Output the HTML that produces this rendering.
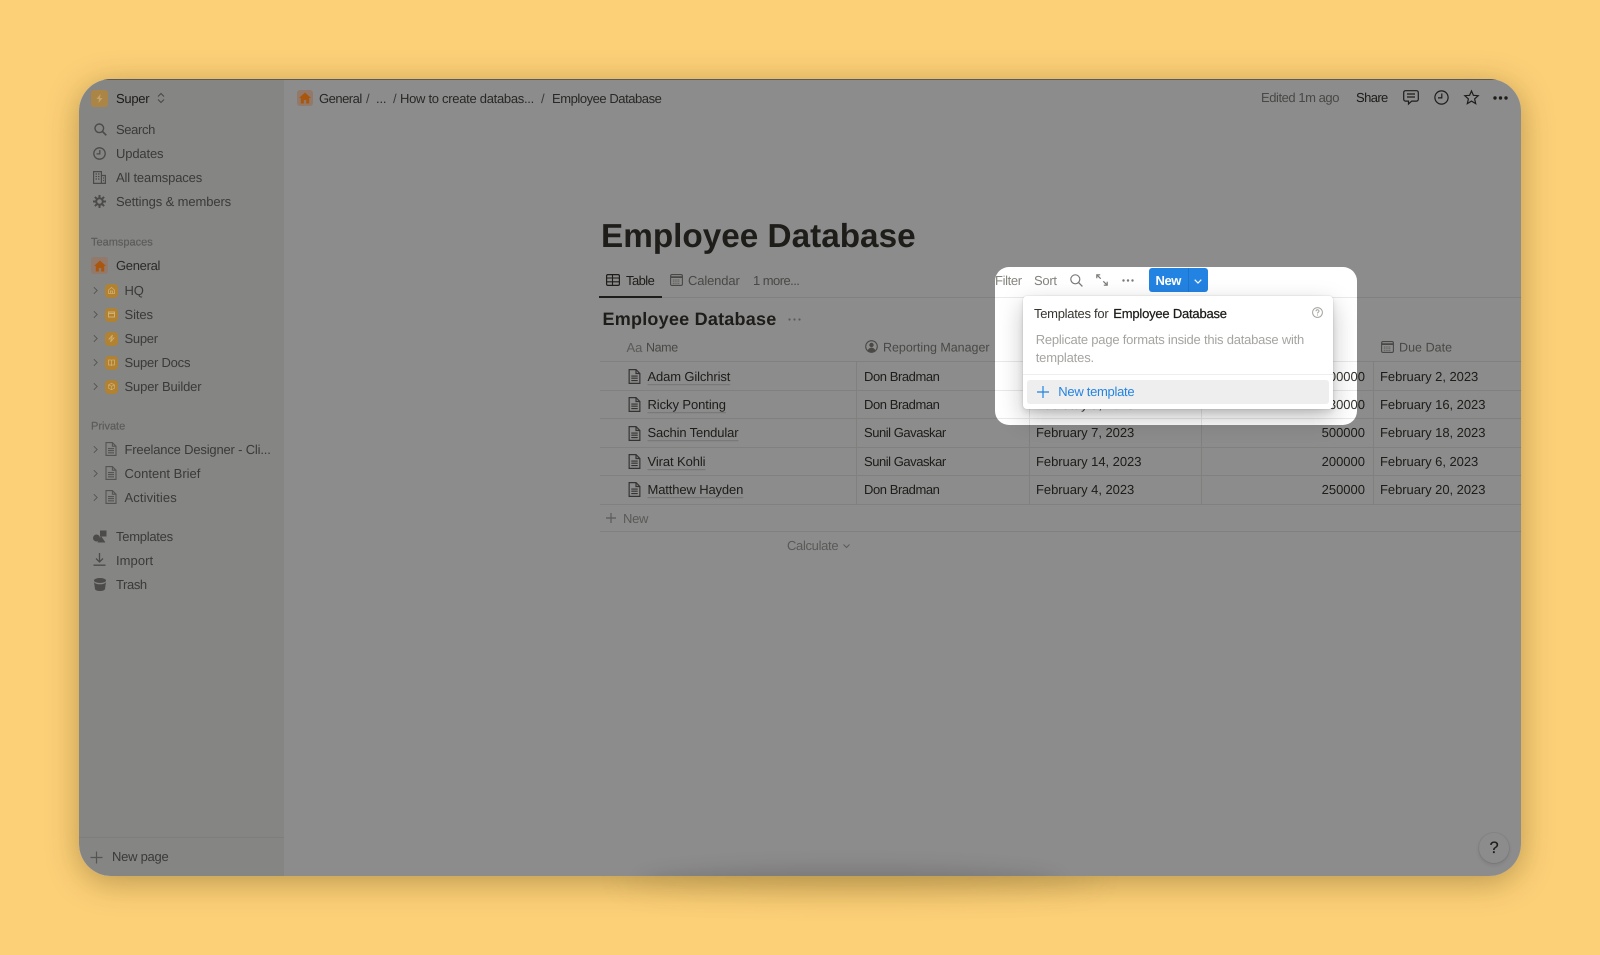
<!DOCTYPE html>
<html lang="en"><head><meta charset="utf-8"><title>Employee Database</title>
<style>
html,body{margin:0;padding:0;width:1600px;height:955px;overflow:hidden;background:#fcd077;font-family:"Liberation Sans",sans-serif;text-rendering:geometricPrecision}
.shadow{position:absolute;left:79px;top:79px;width:1442px;height:797px;border-radius:32px;box-shadow:0 6px 32px rgba(60,40,0,.34)}
.shadow2{position:absolute;left:620px;top:862px;width:480px;height:32px;border-radius:50%;background:rgba(60,40,0,.12);filter:blur(14px)}
.win{position:absolute;left:79px;top:79px;width:1442px;height:797px;border-radius:32px;overflow:hidden;background:#fff;filter:blur(.35px)}
.in{position:absolute;left:-79px;top:-79px;width:1600px;height:955px}
.t{position:absolute;white-space:nowrap;transform:translateY(-50%);line-height:1.2;font-size:13px;letter-spacing:-.15px;color:#37352f}
.s{color:#6b6a66}
.g{color:#85847f}
.u{text-decoration:underline;text-decoration-color:rgba(55,53,47,.22);text-underline-offset:3px}
.h{font-size:11px;letter-spacing:0;color:#a8a7a3;-webkit-text-stroke:.2px #a8a7a3}
.r{position:absolute;left:600px;width:921px;height:1px;background:#e9e9e7}
.c{position:absolute;width:1px;background:#e9e9e7}
svg{position:absolute;overflow:visible}
.ic{fill:none;stroke:#8a8985;stroke-width:1.2}
.hole{position:absolute;left:995px;top:267px;width:362px;height:158px;border-radius:14px;box-shadow:0 0 0 2400px rgba(0,0,0,.45)}
.pop{position:absolute;left:1023px;top:296px;width:310px;height:113px;background:#fff;border-radius:4px;box-shadow:0 0 0 1px rgba(15,15,15,.04),0 3px 6px rgba(15,15,15,.1),0 9px 24px rgba(15,15,15,.25)}
.sq{position:absolute;left:104.500px;width:13.500px;height:13.500px;border-radius:4px;background:#b08232}
.dim{color:#9a9995}
</style></head><body>
<svg width="0" height="0" style="position:absolute"><defs>
<symbol id="doc" viewBox="0 0 12 14"><path d="M1 .6h6.4L11 4.2v9.2H1z M7.4.6v3.6H11 M3 6.6h6M3 8.6h6M3 10.8h6" fill="none" stroke="currentColor" stroke-width="1.1"/></symbol>
<symbol id="chev" viewBox="0 0 6 10"><path d="M1 1l4 4-4 4" fill="none" stroke="currentColor" stroke-width="1.1"/></symbol>
<symbol id="cal" viewBox="0 0 14 13"><rect x=".6" y=".6" width="12.8" height="11.8" rx="1.6" fill="none" stroke="currentColor" stroke-width="1.2"/><path d="M.6 3.4h12.8" stroke="currentColor" stroke-width="2"/><path d="M3 6.5h8M3 8.5h8M3 10.5h8" stroke="currentColor" stroke-width="1" stroke-dasharray="1 1"/></symbol>
</defs></svg>
<div class="shadow"></div><div class="shadow2"></div>
<div class="win"><div class="in">
<!-- sidebar -->
<div style="position:absolute;left:79px;top:79px;width:205px;height:797px;background:#f2f2f0"></div>
<div style="position:absolute;left:79px;top:837px;width:205px;height:1px;background:#e6e6e4"></div>
<span class="t" style="left:116px;top:98.500px;letter-spacing:-.28px;">Super</span>
<svg style="left:156px;top:92px;color:#85847f" width="10" height="12" viewBox="0 0 10 12"><path d="M2 4.5L5 1.5 8 4.5M2 7.5L5 10.5 8 7.5" fill="none" stroke="currentColor" stroke-width="1.1"/></svg>
<span class="t s" style="left:116px;top:129.500px;letter-spacing:-.36px">Search</span>
<span class="t s" style="left:116px;top:153.500px">Updates</span>
<span class="t s" style="left:116px;top:177.500px">All teamspaces</span>
<span class="t s" style="left:116px;top:201.500px;letter-spacing:-.11px">Settings &amp; members</span>
<svg class="ic" style="left:94px;top:123px" width="13" height="13" viewBox="0 0 13 13"><circle cx="5.300" cy="5.300" r="4.300" stroke-width="1.400"/><path d="M8.500 8.500l3.800 3.800" stroke-width="1.600"/></svg>
<svg class="ic" style="left:93px;top:147px" width="13" height="13" viewBox="0 0 13 13"><circle cx="6.500" cy="6.500" r="5.700" stroke-width="1.300"/><path d="M6.800 3v3.900H3.500" stroke-width="1.300"/></svg>
<svg class="ic" style="left:93px;top:171px" width="13" height="13" viewBox="0 0 13 13"><path d="M.6.600h7.800v11.800H.6zM8.400 4.500h4v7.900h-4M2.500 3h1.500M5 3h1.500M2.500 5.500h1.500M5 5.500h1.500M2.500 8h1.500M5 8h1.500M10 7h1M10 9.500h1"/></svg>
<svg class="ic" style="left:93px;top:195px" width="13" height="13" viewBox="0 0 13 13"><circle cx="6.500" cy="6.500" r="3.300" stroke-width="2"/><path d="M6.500 0v2.500M6.500 10.500V13M0 6.500h2.500M10.500 6.500H13M1.900 1.900l1.800 1.800M9.300 9.300l1.800 1.800M1.900 11.100l1.800-1.800M9.300 3.700l1.800-1.800" stroke-width="2"/></svg>

<span class="t h" style="left:91px;top:242.500px">Teamspaces</span>
<span class="t" style="left:116px;top:265.500px;color:#4f4e4a;letter-spacing:-.3px">General</span>
<span class="t s" style="left:124.500px;top:290.500px">HQ</span>
<span class="t s" style="left:124.500px;top:314.500px;letter-spacing:-.1px">Sites</span>
<span class="t s" style="left:124.500px;top:338.500px;letter-spacing:-.28px">Super</span>
<span class="t s" style="left:124.500px;top:362.500px;letter-spacing:-.22px">Super Docs</span>
<span class="t s" style="left:124.500px;top:386.500px;letter-spacing:-.14px">Super Builder</span>
<span class="t h" style="left:91px;top:426.500px">Private</span>
<span class="t s" style="left:124.500px;top:449.500px;letter-spacing:-.18px">Freelance Designer - Cli...</span>
<span class="t s" style="left:124.500px;top:473.500px;letter-spacing:0">Content Brief</span>
<span class="t s" style="left:124.500px;top:497.500px;letter-spacing:.1px">Activities</span>
<svg class="dim" style="left:93px;top:286px" width="5" height="9"><use href="#chev"/></svg>
<svg class="dim" style="left:93px;top:310px" width="5" height="9"><use href="#chev"/></svg>
<svg class="dim" style="left:93px;top:334px" width="5" height="9"><use href="#chev"/></svg>
<svg class="dim" style="left:93px;top:358px" width="5" height="9"><use href="#chev"/></svg>
<svg class="dim" style="left:93px;top:382px" width="5" height="9"><use href="#chev"/></svg>
<svg class="dim" style="left:93px;top:445px" width="5" height="9"><use href="#chev"/></svg>
<svg class="dim" style="left:93px;top:469px" width="5" height="9"><use href="#chev"/></svg>
<svg class="dim" style="left:93px;top:493px" width="5" height="9"><use href="#chev"/></svg>
<svg class="dim" style="left:105px;top:442px" width="12" height="14"><use href="#doc"/></svg>
<svg class="dim" style="left:105px;top:466px" width="12" height="14"><use href="#doc"/></svg>
<svg class="dim" style="left:105px;top:490px" width="12" height="14"><use href="#doc"/></svg>

<span class="t s" style="left:116px;top:536.500px;letter-spacing:-.27px">Templates</span>
<span class="t s" style="left:116px;top:560.500px;letter-spacing:.05px">Import</span>
<span class="t s" style="left:116px;top:584.500px;letter-spacing:-.4px">Trash</span>
<svg style="left:93px;top:530px;fill:#8a8985" width="14" height="13" viewBox="0 0 14 13"><circle cx="3.500" cy="8" r="3.500"/><rect x="7" y=".5" width="6.500" height="6"/><path d="M8 6l4.500 6.500h-8z"/></svg>
<svg class="ic" style="left:93px;top:553px" width="13" height="13" viewBox="0 0 13 13"><path d="M6.500 0v8.500M3 5.500l3.500 3.500L10 5.500M.5 12.200h12" stroke-width="1.300"/></svg>
<svg style="left:94px;top:578px;fill:#8a8985" width="12" height="13" viewBox="0 0 12 13"><ellipse cx="6" cy="2.500" rx="6" ry="2.500"/><path d="M0 4c1 1.800 3.500 2.300 6 2.300S11 5.800 12 4l-1 7c-.3 1.300-2.500 2-5 2s-4.700-.7-5-2z"/></svg>
<span class="t s" style="left:112px;top:857px;letter-spacing:-.26px">New page</span>
<svg class="ic" style="left:90px;top:851px;stroke:#9a9995" width="13" height="13" viewBox="0 0 13 13"><path d="M6.500.5v12M.5 6.500h12"/></svg>

<!-- top bar -->
<span class="t" style="left:319px;top:98.800px;color:#4a4945;letter-spacing:-.5px">General</span>
<span class="t s" style="left:366px;top:98.800px">/</span>
<span class="t" style="left:376px;top:98.800px;color:#4a4945">...</span>
<span class="t s" style="left:393px;top:98.800px">/</span>
<span class="t" style="left:400px;top:98.800px;color:#4a4945;letter-spacing:-.29px">How to create databas...</span>
<span class="t s" style="left:541px;top:98.800px">/</span>
<span class="t" style="left:552px;top:98.800px;color:#4a4945;letter-spacing:-.45px">Employee Database</span>
<span class="t" style="left:1261px;top:97.500px;color:#85847f;letter-spacing:-.45px">Edited 1m ago</span>
<span class="t" style="left:1356px;top:97.500px;letter-spacing:-.6px">Share</span>
<svg class="ic" style="left:1403px;top:90px;stroke:#37352f" width="16" height="15" viewBox="0 0 16 15"><path d="M2.500.7h11a1.800 1.800 0 0 1 1.800 1.800v6.800a1.800 1.800 0 0 1-1.800 1.800H8.700L5.500 14v-2.900h-3A1.800 1.800 0 0 1 .7 9.300V2.500A1.800 1.800 0 0 1 2.500.7zM4 4h8M4 7h8"/></svg>
<svg class="ic" style="left:1434px;top:90px;stroke:#37352f" width="15" height="15" viewBox="0 0 15 15"><circle cx="7.500" cy="7.500" r="6.600"/><path d="M7.800 3.500v4.400H4"/></svg>
<svg class="ic" style="left:1464px;top:90px;stroke:#37352f" width="15" height="15" viewBox="0 0 15 15"><path d="M7.500 1l1.900 4.300 4.800.4-3.600 3.200 1.100 4.700-4.200-2.500-4.200 2.500 1.100-4.700L.8 5.700l4.800-.4z"/></svg>
<svg style="left:1493px;top:96px;fill:#37352f" width="15" height="4" viewBox="0 0 15 4"><circle cx="2" cy="2" r="1.700"/><circle cx="7.500" cy="2" r="1.700"/><circle cx="13" cy="2" r="1.700"/></svg>

<!-- title -->
<div class="t" style="left:601px;top:237px;font-size:33.300px;font-weight:bold;letter-spacing:0;color:#37352f">Employee Database</div>
<!-- tabs -->
<svg style="left:606px;top:274px;color:#37352f" width="14" height="12" viewBox="0 0 14 12"><rect x=".6" y=".6" width="12.800" height="10.800" rx="1.400" fill="none" stroke="currentColor" stroke-width="1.200"/><path d="M.6 4h12.800M.6 7.800h12.800M6.500.6v10.800" stroke="currentColor" stroke-width="1.100"/></svg>
<span class="t" style="left:626px;top:280.500px;letter-spacing:-.55px">Table</span>
<svg style="left:670px;top:274px;color:#85847f" width="13" height="12"><use href="#cal"/></svg>
<span class="t g" style="left:688px;top:280.500px;letter-spacing:-.14px">Calendar</span>
<span class="t g" style="left:753px;top:280.500px;letter-spacing:-.55px">1 more...</span>
<div class="r" style="top:297px"></div>
<div style="position:absolute;left:599px;top:296px;width:63px;height:2px;background:#37352f"></div>
<span class="t g" style="left:995px;top:280.500px;letter-spacing:-.37px">Filter</span>
<span class="t g" style="left:1034px;top:280.500px;letter-spacing:-.28px">Sort</span>
<svg class="ic" style="left:1070px;top:274px;stroke:#7a7975" width="13" height="13" viewBox="0 0 13 13"><circle cx="5.300" cy="5.300" r="4.500" stroke-width="1.200"/><path d="M8.600 8.600l3.800 3.800" stroke-width="1.300"/></svg>
<svg class="ic" style="left:1096px;top:274px;stroke:#7a7975" width="12" height="12" viewBox="0 0 12 12"><path d="M.8.800l3.900 3.900M.8 4.200V.8h3.400M11.200 11.200L7.300 7.300M11.200 7.800v3.400H7.800"/></svg>
<svg style="left:1122px;top:279px;fill:#7a7975" width="12" height="3" viewBox="0 0 12 3"><circle cx="1.500" cy="1.500" r="1.200"/><circle cx="6" cy="1.500" r="1.200"/><circle cx="10.500" cy="1.500" r="1.200"/></svg>
<div style="position:absolute;left:1149px;top:268px;width:59px;height:24px;background:#2383e2;border-radius:3px"></div>
<div style="position:absolute;left:1188px;top:268px;width:1px;height:24px;background:#1f74c9"></div>
<span class="t" style="left:1155.500px;top:280.500px;color:#fff;font-weight:bold;letter-spacing:-.45px">New</span>
<svg style="left:1194px;top:279px" width="8" height="5" viewBox="0 0 8 5"><path d="M.7.700L4 4 7.300.7" fill="none" stroke="#fff" stroke-width="1.200"/></svg>

<div class="t" style="left:602.500px;top:320px;font-size:18px;font-weight:bold;letter-spacing:.23px;color:#37352f">Employee Database</div>
<svg style="left:788px;top:318px;fill:#a5a4a0" width="13" height="3" viewBox="0 0 13 3"><circle cx="1.500" cy="1.500" r="1.100"/><circle cx="6.500" cy="1.500" r="1.100"/><circle cx="11.500" cy="1.500" r="1.100"/></svg>

<!-- table -->
<span class="t" style="left:626.500px;top:347.800px;color:#a5a4a0;letter-spacing:0">Aa</span>
<span class="t g" style="left:646px;top:347.800px;font-size:12.500px;letter-spacing:-.4px">Name</span>
<svg style="left:865px;top:340px" width="13" height="13" viewBox="0 0 13 13"><circle cx="6.500" cy="6.500" r="5.800" fill="none" stroke="#85847f" stroke-width="1.100"/><circle cx="6.500" cy="5" r="2.200" fill="#85847f"/><path d="M2.800 10.500c.6-2 2-2.700 3.700-2.700s3.100.7 3.700 2.700c-1 1-2.300 1.500-3.700 1.500s-2.700-.5-3.700-1.500z" fill="#85847f"/></svg>
<span class="t g" style="left:883px;top:347.800px;font-size:12.500px;letter-spacing:-.03px">Reporting Manager</span>
<svg style="left:1381px;top:341px;color:#85847f" width="13" height="12"><use href="#cal"/></svg>
<span class="t g" style="left:1399px;top:347.800px;font-size:12.500px;letter-spacing:.04px">Due Date</span>

<div class="r" style="top:361px"></div><div class="r" style="top:390px"></div><div class="r" style="top:418px"></div><div class="r" style="top:447px"></div><div class="r" style="top:475px"></div><div class="r" style="top:504px"></div><div class="r" style="top:531px"></div>
<div class="c" style="left:856px;top:361px;height:143px"></div>
<div class="c" style="left:1029px;top:361px;height:143px"></div>
<div class="c" style="left:1201px;top:361px;height:143px"></div>
<div class="c" style="left:1373px;top:361px;height:143px"></div>

<svg style="left:628px;top:369px;color:#5f5e5a" width="13" height="15"><use href="#doc"/></svg>
<svg style="left:628px;top:397px;color:#5f5e5a" width="13" height="15"><use href="#doc"/></svg>
<svg style="left:628px;top:426px;color:#5f5e5a" width="13" height="15"><use href="#doc"/></svg>
<svg style="left:628px;top:454px;color:#5f5e5a" width="13" height="15"><use href="#doc"/></svg>
<svg style="left:628px;top:482px;color:#5f5e5a" width="13" height="15"><use href="#doc"/></svg>
<span class="t u" style="left:647.500px;top:376.500px;letter-spacing:-.13px">Adam Gilchrist</span>
<span class="t u" style="left:647.500px;top:404.500px;letter-spacing:-.08px">Ricky Ponting</span>
<span class="t u" style="left:647.500px;top:433px;letter-spacing:-.14px">Sachin Tendular</span>
<span class="t u" style="left:647.500px;top:461.500px;letter-spacing:-.1px">Virat Kohli</span>
<span class="t u" style="left:647.500px;top:489.500px;letter-spacing:-.13px">Matthew Hayden</span>
<span class="t" style="left:864px;top:376.500px;letter-spacing:-.43px">Don Bradman</span>
<span class="t" style="left:864px;top:404.500px;letter-spacing:-.43px">Don Bradman</span>
<span class="t" style="left:864px;top:433px;letter-spacing:-.46px">Sunil Gavaskar</span>
<span class="t" style="left:864px;top:461.500px;letter-spacing:-.46px">Sunil Gavaskar</span>
<span class="t" style="left:864px;top:489.500px;letter-spacing:-.43px">Don Bradman</span>
<span class="t" style="left:1036px;top:404.500px;letter-spacing:-.05px">February 9, 2023</span>
<span class="t" style="left:1036px;top:433px;letter-spacing:-.05px">February 7, 2023</span>
<span class="t" style="left:1036px;top:461.500px;letter-spacing:-.05px">February 14, 2023</span>
<span class="t" style="left:1036px;top:489.500px;letter-spacing:-.05px">February 4, 2023</span>
<span class="t" style="right:235px;top:376.500px;letter-spacing:0">100000</span>
<span class="t" style="right:235px;top:404.500px;letter-spacing:0">130000</span>
<span class="t" style="right:235px;top:433px;letter-spacing:0">500000</span>
<span class="t" style="right:235px;top:461.500px;letter-spacing:0">200000</span>
<span class="t" style="right:235px;top:489.500px;letter-spacing:0">250000</span>
<span class="t" style="left:1380px;top:376.500px;letter-spacing:-.05px">February 2, 2023</span>
<span class="t" style="left:1380px;top:404.500px;letter-spacing:-.05px">February 16, 2023</span>
<span class="t" style="left:1380px;top:433px;letter-spacing:-.05px">February 18, 2023</span>
<span class="t" style="left:1380px;top:461.500px;letter-spacing:-.05px">February 6, 2023</span>
<span class="t" style="left:1380px;top:489.500px;letter-spacing:-.05px">February 20, 2023</span>
<svg class="ic" style="left:606px;top:513px;stroke:#a5a4a0" width="10" height="10" viewBox="0 0 10 10"><path d="M5 0v10M0 5h10"/></svg>
<span class="t" style="left:623px;top:518.500px;color:#a5a4a0;letter-spacing:-.3px">New</span>
<span class="t" style="left:787px;top:545.500px;color:#a5a4a0;letter-spacing:-.33px">Calculate</span>
<svg style="left:843px;top:544px" width="7" height="5" viewBox="0 0 7 5"><path d="M.5.500L3.500 3.500 6.500.5" fill="none" stroke="#a5a4a0"/></svg>

<div style="position:absolute;left:1479px;top:833px;width:30px;height:30px;border-radius:50%;background:#fff;box-shadow:0 0 0 1px rgba(15,15,15,.06),0 2px 4px rgba(15,15,15,.12)"></div>
<span class="t" style="left:1489.500px;top:848.500px;font-size:16.500px;letter-spacing:0;color:#37352f;-webkit-text-stroke:.2px #37352f">?</span>

<!-- overlay with hole -->
<div class="hole"></div>

<!-- coloured icons above overlay -->
<div style="position:absolute;left:91px;top:90px;width:17px;height:17px;border-radius:3px;background:#ab8545"></div>
<svg style="left:96px;top:94px" width="7" height="9" viewBox="0 0 7 9"><path d="M4.500 0L.5 5h2.500L2.500 9 6.500 4H4z" fill="#c4a46a"/></svg>
<div style="position:absolute;left:297px;top:90px;width:16px;height:16px;border-radius:3px;background:#92796a"></div>
<svg style="left:299px;top:92px" width="12" height="12" viewBox="0 0 12 12"><path d="M6 .5L0 6h1.800v5.500h3V8h2.400v3.500h3V6H12z" fill="#a9560f"/></svg>
<div style="position:absolute;left:91px;top:257px;width:17px;height:17px;border-radius:3px;background:#92796a"></div>
<svg style="left:93.500px;top:259.500px" width="12" height="12" viewBox="0 0 12 12"><path d="M6 .5L0 6h1.800v5.500h3V8h2.400v3.500h3V6H12z" fill="#a9560f"/></svg>
<div class="sq" style="top:284px"></div><div class="sq" style="top:308px"></div><div class="sq" style="top:332px"></div><div class="sq" style="top:356px"></div><div class="sq" style="top:380px"></div>
<svg style="left:108px;top:287px" width="7" height="7" viewBox="0 0 7 7"><path d="M3.500.5L.5 3v3.500h6V3zM2.500 6.500V4h2v2.500" fill="none" stroke="#d4b070" stroke-width=".8"/></svg>
<svg style="left:108px;top:311px" width="7" height="7" viewBox="0 0 7 7"><rect x=".5" y="1" width="6" height="5" fill="none" stroke="#d4b070"/><path d="M.5 2.500h6" stroke="#d4b070"/></svg>
<svg style="left:108px;top:335px" width="7" height="7" viewBox="0 0 7 7"><path d="M4.500 0L1 4h2.500L2.500 7 6 3H3.500z" fill="none" stroke="#d4b070" stroke-width=".8"/></svg>
<svg style="left:108px;top:359px" width="7" height="7" viewBox="0 0 7 7"><path d="M.5 1h2.500l.5.500.5-.5h2.500v5H4l-.5.500L3 6H.5zM3.500 1.500v5" fill="none" stroke="#d4b070" stroke-width=".8"/></svg>
<svg style="left:108px;top:383px" width="7" height="7" viewBox="0 0 7 7"><path d="M3.500.3l3 1.500v3.400l-3 1.500-3-1.500V1.800zM.5 1.800l3 1.500 3-1.500M3.500 3.300v3.400" fill="none" stroke="#d4b070" stroke-width=".7"/></svg>

<!-- popup -->
<div class="pop"></div>
<span class="t" style="left:1034px;top:313.500px;letter-spacing:-.28px">Templates for</span>
<span class="t" style="left:1113.300px;top:313.500px;letter-spacing:-.21px;color:#1d1c19;-webkit-text-stroke:.25px #1d1c19">Employee Database</span>
<svg style="left:1312px;top:307px" width="11" height="11" viewBox="0 0 11 11"><circle cx="5.500" cy="5.500" r="4.900" fill="none" stroke="#a5a4a0"/><path d="M4 4.300c0-2 3-2 3-.2 0 1.200-1.500 1-1.500 2.400M5.500 7.500v1" fill="none" stroke="#a5a4a0"/></svg>
<span class="t" style="left:1035.700px;top:339.500px;color:#a5a4a0;letter-spacing:-.22px">Replicate page formats inside this database with</span>
<span class="t" style="left:1035.700px;top:357.500px;color:#a5a4a0;letter-spacing:-.17px">templates.</span>
<div style="position:absolute;left:1023px;top:374px;width:310px;height:1px;background:#eeeeec"></div>
<div style="position:absolute;left:1027px;top:380px;width:302px;height:24px;border-radius:3px;background:#eeeeee"></div>
<svg style="left:1037px;top:386px" width="12" height="12" viewBox="0 0 12 12"><path d="M6 0v12M0 6h12" stroke="#2383e2" stroke-width="1.200"/></svg>
<span class="t" style="left:1058.300px;top:392px;color:#2383e2;letter-spacing:-.29px">New template</span>

<!-- bottom shade + top line -->
<div style="position:absolute;left:640px;top:868px;width:420px;height:30px;border-radius:50%;background:rgba(0,0,0,.13);filter:blur(9px)"></div>
<div style="position:absolute;left:100px;top:79px;width:1400px;height:1px;background:#5a5a5a"></div>
</div></div>
</body></html>
